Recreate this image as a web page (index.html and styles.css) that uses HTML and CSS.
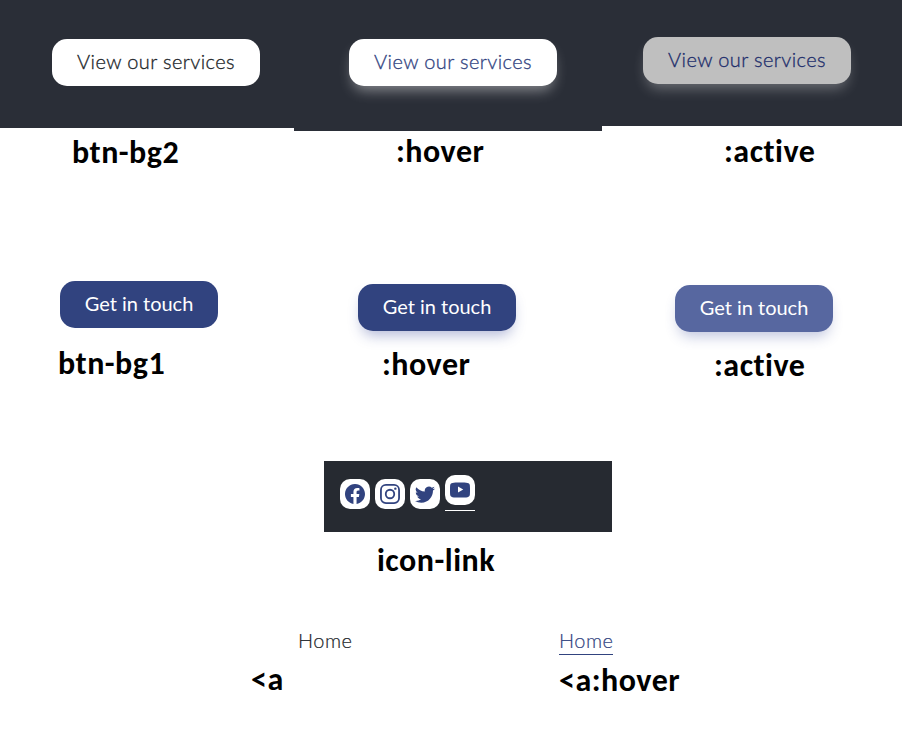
FILE: index.html
```html
<!DOCTYPE html>
<html lang="en">
<head>
<meta charset="utf-8">
<title>Button and link states</title>
<link rel="stylesheet" href="styles.css">
</head>
<body>
<main>
  <section class="row row-light">
    <div class="cell light-base">
      <div class="panel"><a class="btn btn-bg2">View our services</a></div>
      <h2 class="label">btn-bg2</h2>
    </div>
    <div class="cell light-hover">
      <div class="panel"><a class="btn btn-bg2 is-hover">View our services</a></div>
      <h2 class="label">:hover</h2>
    </div>
    <div class="cell light-active">
      <div class="panel"><a class="btn btn-bg2 is-active">View our services</a></div>
      <h2 class="label">:active</h2>
    </div>
  </section>
  <section class="row row-blue">
    <div class="cell blue-base">
      <a class="btn btn-bg1">Get in touch</a>
      <h2 class="label">btn-bg1</h2>
    </div>
    <div class="cell blue-hover">
      <a class="btn btn-bg1 is-hover">Get in touch</a>
      <h2 class="label">:hover</h2>
    </div>
    <div class="cell blue-active">
      <a class="btn btn-bg1 is-active">Get in touch</a>
      <h2 class="label">:active</h2>
    </div>
  </section>
  <section class="icons">
    <div class="strip">
      <a class="icon-link"><svg viewBox="0 0 16 16"><path d="M16 8.049c0-4.446-3.582-8.05-8-8.05C3.58 0-.002 3.603-.002 8.05c0 4.017 2.926 7.347 6.75 7.951v-5.625h-2.03V8.05H6.75V6.275c0-2.017 1.195-3.131 3.022-3.131.876 0 1.791.157 1.791.157v1.98h-1.009c-.993 0-1.303.621-1.303 1.258v1.51h2.218l-.354 2.326H9.25V16c3.824-.604 6.75-3.934 6.75-7.951z"/></svg></a>
      <a class="icon-link"><svg viewBox="0 0 16 16"><rect class="line" x=".75" y=".75" width="14.5" height="14.5" rx="4"/><circle class="line" cx="8" cy="8" r="3.4"/><circle cx="12.27" cy="3.73" r=".96"/></svg></a>
      <a class="icon-link"><svg viewBox="0 0 16 16"><path d="M5.026 15c6.038 0 9.341-5.003 9.341-9.334 0-.14 0-.282-.006-.422A6.685 6.685 0 0 0 16 3.542a6.658 6.658 0 0 1-1.889.518 3.301 3.301 0 0 0 1.447-1.817 6.533 6.533 0 0 1-2.087.793A3.286 3.286 0 0 0 7.875 6.03a9.325 9.325 0 0 1-6.767-3.429 3.289 3.289 0 0 0 1.018 4.382A3.323 3.323 0 0 1 .64 6.575v.045a3.288 3.288 0 0 0 2.632 3.218 3.203 3.203 0 0 1-.865.115 3.23 3.23 0 0 1-.614-.057 3.283 3.283 0 0 0 3.067 2.277A6.588 6.588 0 0 1 .78 13.58a6.32 6.32 0 0 1-.78-.045A9.344 9.344 0 0 0 5.026 15z"/></svg></a>
      <a class="icon-link is-hover"><svg viewBox="0 0 16 16"><path fill-rule="evenodd" d="M8 2c2.7 0 4.800.1 6 .3C15.200 2.500 15.800 3.200 15.900 4.400 16.050 6.700 16.050 9.300 15.900 11.600 15.800 12.800 15.200 13.500 14 13.700 12.800 13.900 10.700 14 8 14s-4.800-.1-6-.3C.8 13.500.2 12.800.1 11.600-.05 9.300-.05 6.700.1 4.400.2 3.200.8 2.500 2 2.300 3.200 2.100 5.300 2 8 2zM6.400 5.200v4.800l4.200-2.400z"/></svg></a>
    </div>
    <h2 class="label">icon-link</h2>
  </section>
  <section class="links">
    <div class="cell link-base">
      <a class="link">Home</a>
      <h2 class="label">&lt;a</h2>
    </div>
    <div class="cell link-hover">
      <a class="link is-hover">Home</a>
      <h2 class="label">&lt;a:hover</h2>
    </div>
  </section>
</main>
</body>
</html>
```
FILE: styles.css
```css
* { box-sizing: border-box; }
body { margin: 0; background: #fff; font-family: Lato, sans-serif; }
main { height: 735px; overflow: hidden; }
.row, .links { display: flex; align-items: flex-start; }
.row-light { height: 281px; }
.cell { display: flex; flex-direction: column; align-items: flex-start; flex: none; }
.label { margin: 0; font: 700 32px/38px Carlito, Lato, sans-serif; letter-spacing: .5px; font-variant-ligatures: none; color: #000; white-space: nowrap; }

.panel { width: 100%; background: #2a2e37; display: flex; }
.light-base { width: 294px; }
.light-hover { width: 308px; }
.light-active { width: 300px; }
.light-base .panel { height: 128px; padding: 39px 0 0 52px; }
.light-hover .panel { height: 131px; padding: 39px 0 0 55px; }
.light-active .panel { height: 126px; padding: 37px 0 0 41px; }
.light-base .label { margin: 6px 0 0 72px; }
.light-hover .label { margin: 2px 0 0 102px; }
.light-active .label { margin: 7px 0 0 122px; }

.btn { display: block; height: 47px; border-radius: 15px; font-size: 20px; line-height: 45px; text-align: center; white-space: nowrap; }
.btn-bg2 { width: 208px; background: #fff; color: #212529; font-weight: 300; letter-spacing: .4px; -webkit-text-stroke: .3px currentColor; }
.btn-bg2.is-hover { color: #31437f; box-shadow: 0 8px 14px -4px rgba(255, 255, 255, .45); }
.btn-bg2.is-active { background: #bfbfbf; color: #1d2d6b; box-shadow: 0 8px 14px -4px rgba(255, 255, 255, .32); }
.btn-bg1 { width: 158px; background: #31437f; color: #fff; font-weight: 400; }
.btn-bg1.is-hover { box-shadow: 0 8px 14px -4px rgba(49, 67, 150, .38); }
.btn-bg1.is-active { background: #5767a0; box-shadow: 0 8px 14px -4px rgba(49, 67, 150, .32); }

.row-blue { height: 180px; padding-left: 60px; }
.blue-base { width: 298px; }
.blue-hover { width: 317px; padding-top: 3px; }
.blue-active { width: 158px; padding-top: 4px; }
.blue-base .label { margin: 17px 0 0 -2px; }
.blue-hover .label { margin: 15px 0 0 24px; }
.blue-active .label { margin: 15px 0 0 39px; }

.icons { height: 167px; padding-left: 324px; }
.strip { display: flex; gap: 5px; width: 288px; height: 71px; padding: 18px 16px; background: #262a31; }
.icon-link { display: flex; align-items: center; justify-content: center; width: 30px; height: 30px; border-radius: 10px; background: #fff; }
.icon-link svg { width: 20px; height: 20px; fill: #31437f; }
.icon-link .line { fill: none; stroke: #31437f; stroke-width: 1.45; }
.icon-link.is-hover { position: relative; top: -4px; }
.icon-link.is-hover::after { content: ""; position: absolute; left: 0; top: 35px; width: 30px; height: 1px; background: #fff; }
.icons .label { margin: 10px 0 0 53px; }

.links { padding-left: 251px; }
.link-base { width: 308px; }
.link { display: block; height: 27px; font-size: 20px; line-height: 24px; font-weight: 300; letter-spacing: .5px; color: #212529; -webkit-text-stroke: .2px currentColor; }
.link-base .link { margin-left: 47px; }
.link.is-hover { color: #31437f; border-bottom: 1px solid #31437f; }
.link-base .label { margin: 6px 0 0; }
.link-hover .label { margin-top: 7px; }
```
